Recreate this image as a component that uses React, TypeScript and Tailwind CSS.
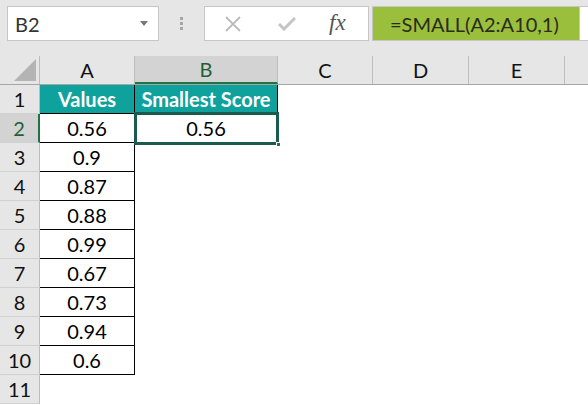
import React from "react";

const font = { fontFamily: "Lato, 'Open Sans', sans-serif" };

const values = ["0.56", "0.9", "0.87", "0.88", "0.99", "0.67", "0.73", "0.94", "0.6"];

function ColHead({ label, w, selected }: { label: string; w: string; selected?: boolean }) {
  return (
    <div
      className={`${w} h-full flex items-center justify-center text-[20px] border-r border-[#bdbdbd] ${
        selected ? "bg-[#d3d3d3] text-[#1f5f35] border-b-2 border-b-[#217346]" : "text-[#111]"
      }`}
    >
      {label}
    </div>
  );
}

export default function App() {
  return (
    <div className="w-[588px] h-[405px] overflow-hidden bg-white relative" style={font}>
      {/* Formula bar */}
      <div className="h-[56px] bg-[#e6e6e6] flex items-start pt-[6px] pl-[7px]">
        <div className="w-[152px] h-[35px] bg-white border border-[#c6c6c6] flex items-center justify-between pl-[7px] pr-[10px]">
          <span className="text-[20px] text-[#333]">B2</span>
          <svg width="8" height="5" viewBox="0 0 8 5"><path d="M0 0 L8 0 L4 5 Z" fill="#777" /></svg>
        </div>
        <div className="w-[45px] h-[35px] flex flex-col items-center justify-center gap-[2px]">
          <div className="w-[3px] h-[3px] bg-[#a6a6a6]" />
          <div className="w-[3px] h-[3px] bg-[#a6a6a6]" />
          <div className="w-[3px] h-[3px] bg-[#a6a6a6]" />
        </div>
        <div className="w-[165px] h-[35px] bg-white border border-[#c6c6c6] flex items-center">
          <svg className="ml-[20px]" width="16" height="16" viewBox="0 0 16 16">
            <path d="M1 1 L15 15 M15 1 L1 15" stroke="#bcbcbc" strokeWidth="1.8" />
          </svg>
          <svg className="ml-[37px]" width="18" height="15" viewBox="0 0 18 15">
            <path d="M1 8 L6 13 L17 2" stroke="#c4c4c4" strokeWidth="3" fill="none" />
          </svg>
          <span
            className="ml-[33px] text-[23px] italic text-[#555]"
            style={{ fontFamily: "'Liberation Serif', serif" }}
          >
            fx
          </span>
        </div>
        <div className="ml-[3px] w-[208px] h-[35px] bg-[#99bf3c] border border-[#c6c6c6] flex items-center pl-[17px] text-[20px] text-[#2b2b1a]">
          =SMALL(A2:A10,1)
        </div>
        <div className="flex-1 h-[35px] bg-white border-y border-[#c6c6c6]" />
      </div>

      {/* Column header row */}
      <div className="h-[29px] flex bg-[#e6e6e6] border-b border-[#a6a6a6]">
        <div className="w-[40px] h-full border-r border-[#bdbdbd] relative">
          <svg className="absolute right-[3px] bottom-[3px]" width="22" height="22" viewBox="0 0 22 22">
            <path d="M22 0 L22 22 L0 22 Z" fill="#b4b4b4" />
          </svg>
        </div>
        <ColHead label="A" w="w-[95px]" />
        <ColHead label="B" w="w-[143px]" selected />
        <ColHead label="C" w="w-[95px]" />
        <ColHead label="D" w="w-[96px]" />
        <ColHead label="E" w="w-[96px]" />
        <div className="flex-1" />
      </div>

      {/* Row 1 */}
      <div className="h-[29px] flex">
        <div className="w-[40px] h-full bg-[#e6e6e6] border-r border-[#bdbdbd] border-b border-b-[#d0d0d0] flex items-center justify-center text-[20px] text-[#111]">
          1
        </div>
        <div className="w-[95px] h-full bg-[#0fa19b] border-r border-b border-black flex items-center justify-center text-white font-bold text-[20px]">
          Values
        </div>
        <div className="w-[143px] h-full bg-[#0fa19b] border-r border-b border-black flex items-center justify-center text-white font-bold text-[20px]">
          Smallest Score
        </div>
      </div>

      {/* Row 2 */}
      <div className="h-[29px] flex">
        <div className="w-[40px] h-full bg-[#d3d3d3] border-r-2 border-[#217346] border-b border-b-[#d0d0d0] flex items-center justify-center text-[20px] text-[#1f5f35]">
          2
        </div>
        <div className="w-[95px] h-full border-r border-b border-black flex items-center justify-center text-[20px] text-black">
          0.56
        </div>
        <div className="w-[143px] h-full border-r border-b border-black flex items-center justify-center text-[20px] text-black">
          0.56
        </div>
      </div>

      {values.slice(1).map((v, i) => (
        <div key={i} className="h-[29px] flex">
          <div className="w-[40px] h-full bg-[#e6e6e6] border-r border-[#bdbdbd] border-b border-b-[#d0d0d0] flex items-center justify-center text-[20px] text-[#111]">
            {i + 3}
          </div>
          <div className="w-[95px] h-full border-r border-b border-black flex items-center justify-center text-[20px] text-black">
            {v}
          </div>
        </div>
      ))}

      <div className="h-[29px] flex">
        <div className="w-[40px] h-full bg-[#e6e6e6] border-r border-[#bdbdbd] border-b border-b-[#d0d0d0] flex items-center justify-center text-[20px] text-[#111]">
          11
        </div>
      </div>

      {/* Selection outline */}
      <div className="absolute left-[134px] top-[112px] w-[145px] h-[33px] border-[3px] border-[#1b5a4e]" />
      <div className="absolute left-[276px] top-[142px] w-[5px] h-[5px] bg-[#217346] border border-white" />
    </div>
  );
}
